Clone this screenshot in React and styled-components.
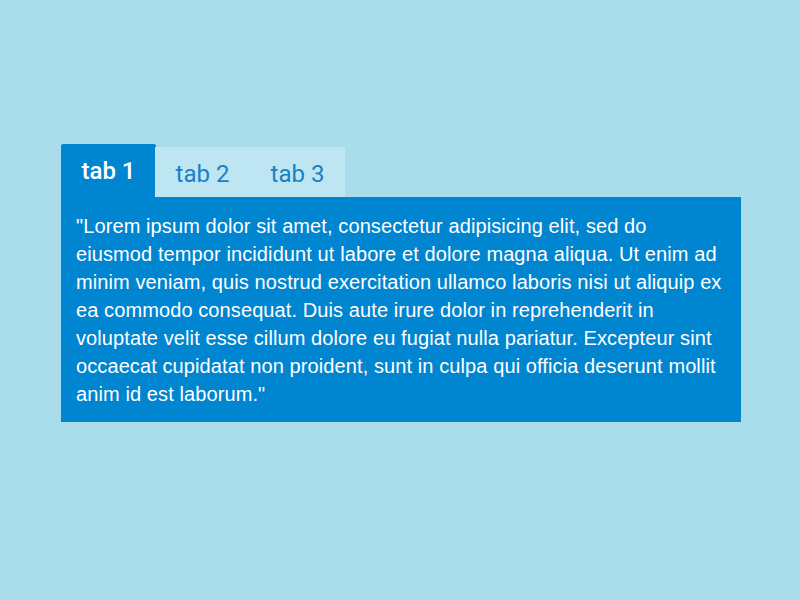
import styled, { createGlobalStyle } from 'styled-components'
import { useState } from 'react'

const Global = createGlobalStyle`
    html, body {
        margin: 0;
        padding: 0;
        background: #a9ddec;
    }
`

const tabs = ['tab 1', 'tab 2', 'tab 3']

// line breaks as in the reference
const lines = [
    '"Lorem ipsum dolor sit amet, consectetur adipisicing elit, sed do',
    'eiusmod tempor incididunt ut labore et dolore magna aliqua. Ut enim ad',
    'minim veniam, quis nostrud exercitation ullamco laboris nisi ut aliquip ex',
    'ea commodo consequat. Duis aute irure dolor in reprehenderit in',
    'voluptate velit esse cillum dolore eu fugiat nulla pariatur. Excepteur sint',
    'occaecat cupidatat non proident, sunt in culpa qui officia deserunt mollit',
    'anim id est laborum."',
]

export default function App(){
    const [active, setActive] = useState(0)
    return(
        <Page>
            <Global />
            <Tabs>
                <TabBar>
                    {tabs.map((t, i) => (
                        <Tab key={t} $active={i === active} onClick={() => setActive(i)}>{t}</Tab>
                    ))}
                </TabBar>
                <Panel>
                    {lines.map(l => <Line key={l}>{l}</Line>)}
                </Panel>
            </Tabs>
        </Page>
    )
}

const Page = styled.div`
    width: 800px;
    height: 600px;
    padding: 144px 0 0 61px;
    box-sizing: border-box;
`

const Tabs = styled.div`
    width: 680px;
`

const TabBar = styled.div`
    display: flex;
    align-items: flex-end;
    height: 53px;
`

const Tab = styled.div`
    width: 95px;
    height: ${p => p.$active ? '53px' : '50px'};
    margin-right: ${p => p.$active ? '-1px' : '0'};
    display: flex;
    align-items: center;
    justify-content: center;
    box-sizing: border-box;
    padding-top: ${p => p.$active ? '1px' : '4px'};
    font-family: Roboto, "Noto Sans", sans-serif;
    font-size: 24px;
    font-weight: ${p => p.$active ? 500 : 400};
    color: ${p => p.$active ? '#ffffff' : '#1a80c6'};
    background: ${p => p.$active ? '#0085d1' : '#bde6f2'};
    border-radius: ${p => p.$active ? '2px 2px 0 0' : '0'};
    cursor: pointer;
`

const Panel = styled.div`
    background: #0085d1;
    color: #ffffff;
    font-family: "Liberation Sans", Arial, sans-serif;
    font-size: 20px;
    letter-spacing: 0.1px;
    line-height: 28px;
    padding: 15px 14px 14px 15px;
    box-sizing: border-box;
    height: 225px;
`

const Line = styled.div`
    white-space: nowrap;
`
